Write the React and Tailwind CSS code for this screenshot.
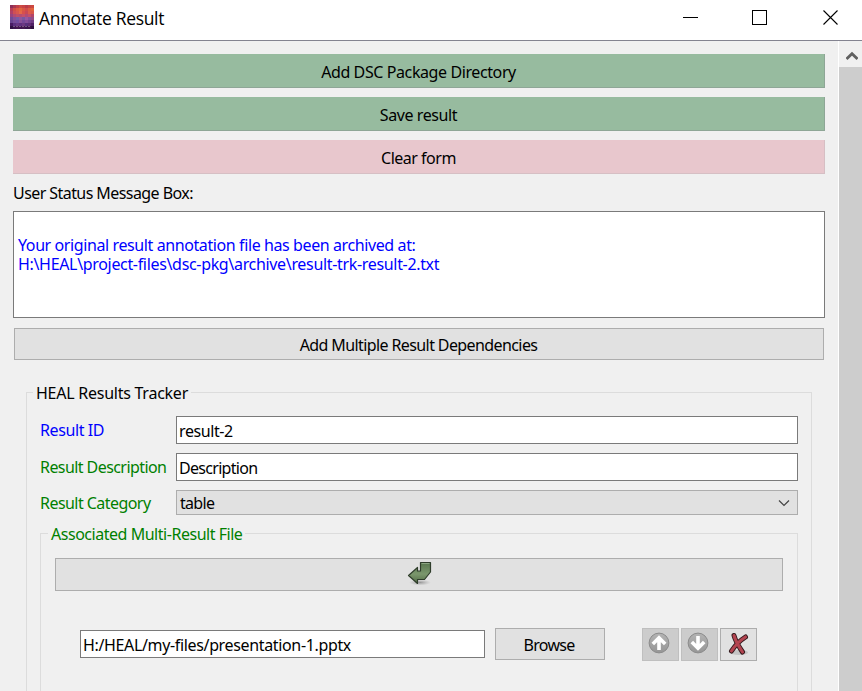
import React from "react";

const TILE_ROWS = [
  ["#8c3058", "#a83850", "#c04048", "#cc4c44", "#c84444", "#b83c48", "#c44444", "#cc4840"],
  ["#b83c58", "#d05048", "#dc5c44", "#e06840", "#d85844", "#d04c4c", "#dc5c44", "#e0643c"],
  ["#b04068", "#d05054", "#d85850", "#e46848", "#d8504c", "#c84858", "#dc5c4c", "#d85848"],
  ["#984480", "#b04c74", "#c05068", "#b84c70", "#c4506c", "#b04c78", "#c45068", "#b44468"],
  ["#704c98", "#885098", "#785ca4", "#90589c", "#7858a0", "#9858a0", "#84509c", "#944c84"],
  ["#684490", "#784c98", "#704ca0", "#885098", "#744898", "#844c98", "#744490", "#703c84"],
  ["#481c64", "#5c3080", "#683884", "#603080", "#6c3880", "#58307c", "#602c74", "#502064"],
  ["#301044", "#3c1450", "#441850", "#401450", "#441850", "#38144c", "#3c1448", "#301040"],
];

function AppIcon() {
  return (
    <svg width="24" height="24" viewBox="0 0 24 24" className="shrink-0">
      {TILE_ROWS.map((row, y) =>
        row.map((c, x) => <rect key={x + "-" + y} x={x * 3} y={y * 3} width="3" height="3" fill={c} />)
      )}
      <path d="M3 21.500h18" stroke="#9a7aa4" strokeWidth="1" strokeDasharray="2 1" opacity=".6" />
    </svg>
  );
}

function TitleBar() {
  return (
    <header className="flex h-[41px] items-start border-b border-[#838390] bg-white pl-2.5">
      <div className="flex pt-[5px]">
        <AppIcon />
        <h1 className="ml-[5px] mt-px h-6 whitespace-nowrap font-['Open_Sans','Noto_Sans',sans-serif] text-[17.5px] leading-6 tracking-[-0.33px]">
          Annotate Result
        </h1>
      </div>
      <div className="ml-auto flex pr-[23px] pt-[10px]">
        <svg width="16" height="16" viewBox="0 0 16 16" shapeRendering="crispEdges">
          <path d="M0 7.5h15" stroke="#000" />
        </svg>
        <svg width="16" height="16" viewBox="0 0 16 16" shapeRendering="crispEdges" className="ml-[53px]">
          <rect x=".5" y=".5" width="14" height="14" fill="none" stroke="#000" />
        </svg>
        <svg width="16" height="16" viewBox="0 0 16 16" className="ml-[55px]">
          <path d="M.5.5l14 14M14.5.5l-14 14" stroke="#000" strokeWidth="1.1" />
        </svg>
      </div>
    </header>
  );
}

function ColorButton({ className, children }) {
  return (
    <button className={"h-[34px] border-b border-r pt-[3px] text-center leading-[30px] " + className}>{children}</button>
  );
}

function Arrow({ down }) {
  return (
    <svg width="22" height="22" viewBox="0 0 22 22" className="mb-[3px] mr-[3px]">
      <defs>
        <linearGradient id="disc" x1="0" y1="0" x2="0" y2="1">
          <stop offset="0" stopColor="#b4b4b4" />
          <stop offset="1" stopColor="#969696" />
        </linearGradient>
      </defs>
      <circle cx="11" cy="11" r="9.9" fill="url(#disc)" stroke="#8b8b8b" />
      <path
        d="M11 18V6.5M4.800 12L11 5.800l6.200 6.200"
        transform={down ? "rotate(180 11 11)" : undefined}
        fill="none"
        stroke="#fff"
        strokeWidth="3.6"
      />
    </svg>
  );
}

function ReturnArrow() {
  return (
    <svg width="26" height="26" viewBox="0 0 26 26" className="mb-[3px] ml-0.5">
      <defs>
        <linearGradient id="leaf" x1="0" y1="0" x2="0" y2="1">
          <stop offset="0" stopColor="#58764e" />
          <stop offset=".55" stopColor="#7b976d" />
          <stop offset="1" stopColor="#526c45" />
        </linearGradient>
        <radialGradient id="leafShade">
          <stop offset="0" stopColor="#777" stopOpacity=".7" />
          <stop offset="1" stopColor="#999" stopOpacity="0" />
        </radialGradient>
      </defs>
      <ellipse cx="13" cy="22.500" rx="11" ry="3" fill="url(#leafShade)" />
      <path d="M13.500 2.500h10v9.500L17.500 19.500h-7v4L1.500 15.500l9-8V11h3z" fill="url(#leaf)" stroke="#2f3d2b" strokeWidth="1.2" strokeLinejoin="round" />
      <path d="M14.500 3.500h8" stroke="#8ca583" />
    </svg>
  );
}

function DeleteMark() {
  return (
    <svg width="24" height="24" viewBox="0 0 24 24" className="mb-0.5">
      <ellipse cx="12" cy="20.500" rx="9" ry="2.500" fill="#c4c4c4" />
      <path d="M7 3.500c1.500 6 4.500 10.500 8.500 16.500M18.500 5C13 8.500 8 13.500 4.500 19" fill="none" stroke="#33191c" strokeWidth="5" strokeLinecap="round" />
      <path d="M7 3.500c1.500 6 4.500 10.500 8.500 16.500M18.500 5C13 8.500 8 13.500 4.500 19" fill="none" stroke="#b34450" strokeWidth="3.100" strokeLinecap="round" />
    </svg>
  );
}

const field = "flex h-7 items-center border border-[#7a7a7a] bg-white pl-0.5 pt-0.5";
const iconButton = "flex h-[33px] w-[37px] items-center justify-center border";
const green = "border-b-[#8ea696] border-r-[#8ea696] bg-[#97bb9f]";

export default function App() {
  return (
    <div className="flex h-[691px] w-[862px] flex-col overflow-hidden bg-[#f0f0f0] font-['Noto_Sans',sans-serif] text-[16px] leading-5 tracking-[-0.4px] text-black">
      <TitleBar />
      <div className="flex min-h-0 flex-1">
        <main className="flex w-[838px] flex-col overflow-hidden pl-[13px] pr-[13px] pt-[13px]">
          <div className="flex flex-col gap-[9px]">
            <ColorButton className={green}>Add DSC Package Directory</ColorButton>
            <ColorButton className={green}>Save result</ColorButton>
            <ColorButton className="border-b-[#d6bfc4] border-r-[#d6bfc4] bg-[#e8c7cd] tracking-[-0.5px]">Clear form</ColorButton>
          </div>
          <p className="mt-[9px] h-5 tracking-[-0.57px]">User Status Message Box:</p>
          <div className="mt-2 h-[107px] shrink-0 border border-[#7a7a7a] bg-white pl-1 pt-6 leading-[19px] text-[#0000ff]">
            <p>
              Your original result annotation file has been archived at:
              <br />
              <span className="tracking-[-0.33px]">H:\HEAL\project-files\dsc-pkg\archive\result-trk-result-2.txt</span>
            </p>
          </div>
          <button className="mx-px mt-2.5 h-8 shrink-0 border border-[#adadad] bg-[#e1e1e1] pr-px pt-0.5 tracking-[-0.6px]">Add Multiple Result Dependencies</button>

          <fieldset className="ml-[13px] mr-[13px] mt-[22px] h-[340px] shrink-0 border border-[#dcdcdc] px-[13px]">
            <legend className="-ml-[7px] h-5 px-[3px] leading-[22px] tracking-[-0.25px]">HEAL Results Tracker</legend>
            <div className="mt-[14px] grid grid-cols-[136px_1fr] gap-y-[9px]">
              <label className="pt-1 text-[#0000ff]">Result ID</label>
              <div className={field}>result-2</div>
              <label className="pt-1 tracking-[-0.57px] text-[#008000]">Result Description</label>
              <div className={field + " tracking-[-0.7px]"}>Description</div>
              <label className="pt-[3px] tracking-[-0.55px] text-[#008000]">Result Category</label>
              <div className="flex h-[25px] items-center justify-between border border-[#adadad] bg-[#e1e1e1] pl-[3px] pr-[7px]">
                <span className="pt-px tracking-[-0.7px]">table</span>
                <svg width="12" height="8" viewBox="0 0 12 8">
                  <path d="M1 1.500l5 5 5-5" fill="none" stroke="#444" strokeWidth="1.200" />
                </svg>
              </div>
            </div>
            <fieldset className="mt-[8px] h-[200px] border border-[#dcdcdc] px-[14px]">
              <legend className="-ml-[7px] h-5 px-[3px] leading-[22px] tracking-[-0.47px] text-[#008000]">
                Associated Multi-Result File
              </legend>
              <button className="mt-[15px] flex h-[33px] w-full items-center justify-center border border-[#adadad] bg-[#e1e1e1]">
                <ReturnArrow />
              </button>
              <div className="mt-[37px] flex items-start pl-[25px]">
                <div className={"mt-0.5 w-[405px] tracking-[-0.35px] " + field}>H:/HEAL/my-files/presentation-1.pptx</div>
                <button className="ml-2.5 h-8 w-[110px] border border-[#adadad] bg-[#e1e1e1] pr-0.5 pt-0.5 tracking-[-0.7px]">Browse</button>
                <div className="ml-[37px] flex gap-0.5">
                  <button className={iconButton + " border-[#bfbfbf] bg-[#cccccc]"}><Arrow /></button>
                  <button className={iconButton + " border-[#bfbfbf] bg-[#cccccc]"}><Arrow down /></button>
                  <button className={iconButton + " border-[#adadad] bg-[#e1e1e1]"}><DeleteMark /></button>
                </div>
              </div>
            </fieldset>
          </fieldset>
        </main>
        <aside className="flex w-6 flex-col border-l border-white bg-[#cdcdcd]">
          <div className="flex h-[26px] items-center justify-center bg-[#f0f0f0] pl-0.5 pt-1">
            <svg width="12" height="10" viewBox="0 0 12 10">
              <path d="M.5 8L6 2.800 11.500 8" fill="none" stroke="#606060" strokeWidth="2.800" />
            </svg>
          </div>
        </aside>
      </div>
    </div>
  );
}
